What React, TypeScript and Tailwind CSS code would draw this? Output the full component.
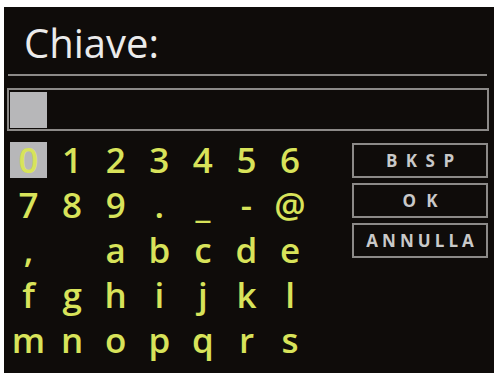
import React from 'react';

const rows: string[][] = [
  ['0', '1', '2', '3', '4', '5', '6'],
  ['7', '8', '9', '.', '_', '-', '@'],
  [',', ' ', 'a', 'b', 'c', 'd', 'e'],
  ['f', 'g', 'h', 'i', 'j', 'k', 'l'],
  ['m', 'n', 'o', 'p', 'q', 'r', 's'],
];

const buttons = [
  { label: 'BKSP', cls: 'tracking-[0.5em] pl-[0.5em]' },
  { label: 'OK', cls: 'tracking-[0.6em] pl-[0.6em]' },
  { label: 'ANNULLA', cls: 'tracking-[0.24em] pl-[0.24em]' },
];

export default function App() {
  return (
    <div className="w-[498px] h-[373px] bg-white overflow-hidden pt-[7px] pl-[4px]" style={{ fontFamily: '"Open Sans", "Noto Sans", sans-serif' }}>
      <div className="w-[490px] h-[366px] bg-[#0f0c0a] flex flex-col">
        {/* title */}
        <div className="pl-[20px] pt-[17px] h-[55px] text-[40px] leading-[38px] text-[#ebebeb]">Chiave:</div>

        <div className="mt-[12px] ml-[4px] mr-[7px] h-[2px] bg-[#8c8a88]" />

        {/* input field */}
        <div className="mt-[12px] ml-[3px] mr-[5px] h-[43px] border-2 border-[#8c8a88] pt-[2px] pl-[1px]">
          <div className="w-[37px] h-[36px] bg-[#b7b7b9]" />
        </div>

        {/* keyboard */}
        <div className="mt-[11px] flex">
          <div className="ml-[6px] grid grid-cols-[repeat(7,37px)] auto-rows-[36px] gap-x-[6.6px] gap-y-[9px]">
            {rows.flat().map((ch, i) => (
              <div
                key={i}
                className={
                  'flex items-center justify-center text-[35px] font-semibold leading-[36px] text-[#d8e35a] ' +
                  (i === 0 ? 'bg-[#b7b7b9]' : '')
                }
              >
                {ch}
              </div>
            ))}
          </div>

          <div className="ml-auto mr-[6px] mt-[1px] w-[136px] flex flex-col gap-[5px]">
            {buttons.map((b) => (
              <div
                key={b.label}
                className={'h-[35px] border-2 border-[#8c8a88] flex items-center justify-center text-[17px] font-bold text-[#c9c9c9] ' + b.cls}
              >
                {b.label}
              </div>
            ))}
          </div>
        </div>
      </div>
    </div>
  );
}
